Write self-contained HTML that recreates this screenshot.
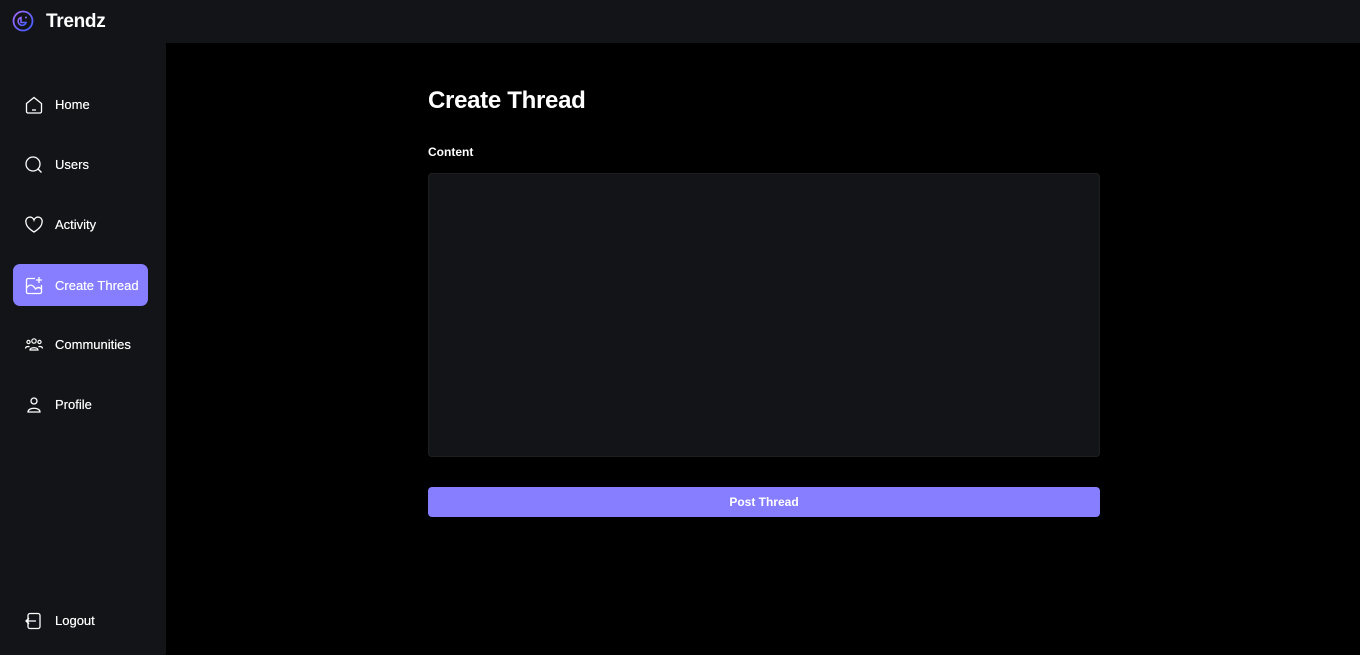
<!DOCTYPE html>
<html><head><style>
*{margin:0;padding:0;box-sizing:border-box}
body{width:1360px;height:655px;background:#000;font-family:"Liberation Sans",sans-serif;color:#fff;position:relative;overflow:hidden}
.top{position:absolute;left:0;top:0;width:1360px;height:43px;background:#121417}
.logo{position:absolute;left:12px;top:10px}
.brand{position:absolute;left:46px;top:11px;font-size:19px;font-weight:bold;letter-spacing:-0.3px}
.side{position:absolute;left:0;top:43px;width:166px;height:612px;background:#121417}
.item{position:absolute;left:13px;width:135px;height:42px;border-radius:7px;font-size:13px;font-weight:normal;text-shadow:0 0 0.4px #fff}
.item svg{position:absolute;left:11px;top:12px}
.item span{position:absolute;left:42px;top:14px}
.act{background:#877eff}
h1{position:absolute;left:428px;top:87px;font-size:24px;font-weight:bold;letter-spacing:-0.3px}
.lbl{position:absolute;left:428px;top:145px;font-size:12px;font-weight:bold}
.ta{position:absolute;left:428px;top:173px;width:672px;height:284px;background:#121417;border:1px solid #1f1f22;border-radius:4px}
.btn{position:absolute;left:428px;top:487px;width:672px;height:30px;background:#877eff;border-radius:4px;font-size:12px;font-weight:bold;text-align:center;line-height:30px}
</style></head><body>
<div class="top">
<svg class="logo" width="22" height="22" viewBox="0 0 22 22"><defs><linearGradient id="g" x1="0" y1="0" x2="1" y2="1"><stop offset="0" stop-color="#a86bff"/><stop offset="1" stop-color="#3b5bff"/></linearGradient></defs><circle cx="11" cy="11" r="9.5" fill="none" stroke="url(#g)" stroke-width="1.8"/><path d="M9 7.5a4 4 0 1 0 5 5h-5z" fill="none" stroke="url(#g)" stroke-width="1.6"/><circle cx="14" cy="7.5" r="1" fill="#8a6bff"/></svg>
<div class="brand">Trendz</div>
</div>
<div class="side">
<div class="item" style="top:40px"><svg width="20" height="20" viewBox="0 0 20 20" fill="none" stroke="#fff" stroke-width="1.3"><path d="M2.5 8.5L10 2.5l7.5 6v8a1.5 1.5 0 0 1-1.5 1.5H4a1.5 1.5 0 0 1-1.5-1.5z"/><path d="M8 15h4"/></svg><span>Home</span></div>
<div class="item" style="top:100px"><svg width="20" height="20" viewBox="0 0 20 20" fill="none" stroke="#fff" stroke-width="1.3"><circle cx="9" cy="9" r="7"/><path d="M14 14l3.5 3.5"/></svg><span>Users</span></div>
<div class="item" style="top:160px"><svg width="20" height="20" viewBox="0 0 20 20" fill="none" stroke="#fff" stroke-width="1.3"><path d="M10 17S2 12.5 2 7.5A4 4 0 0 1 10 5a4 4 0 0 1 8 2.5C18 12.5 10 17 10 17z"/></svg><span>Activity</span></div>
<div class="item act" style="top:221px"><svg width="20" height="20" viewBox="0 0 20 20" fill="none" stroke="#fff" stroke-width="1.3"><path d="M11 2.5H4A1.5 1.5 0 0 0 2.5 4v12A1.5 1.5 0 0 0 4 17.5h12a1.5 1.5 0 0 0 1.5-1.5V9"/><path d="M2.5 12c3-4 6-4 9 1 2-2 4-2 6 0"/><path d="M15 1v6M12 4h6"/></svg><span>Create Thread</span></div>
<div class="item" style="top:280px"><svg width="20" height="20" viewBox="0 0 20 20" fill="none" stroke="#fff" stroke-width="1.2"><circle cx="10" cy="6" r="2.2"/><path d="M6 15c0-3 8-3 8 0z"/><circle cx="4.5" cy="7" r="1.6"/><circle cx="15.5" cy="7" r="1.6"/><path d="M1.5 13.5c0-2 3-2.5 4-1.5M18.5 13.5c0-2-3-2.5-4-1.5"/></svg><span>Communities</span></div>
<div class="item" style="top:340px"><svg width="20" height="20" viewBox="0 0 20 20" fill="none" stroke="#fff" stroke-width="1.3"><circle cx="10" cy="6" r="3"/><path d="M4 17c0-5 12-5 12 0z"/></svg><span>Profile</span></div>
<div class="item" style="top:556px"><svg width="20" height="20" viewBox="0 0 20 20" fill="none" stroke="#fff" stroke-width="1.3"><rect x="4" y="2.5" width="12" height="15" rx="2"/><path d="M12 10H2M5 7l-3 3 3 3"/></svg><span>Logout</span></div>
</div>
<h1>Create Thread</h1>
<div class="lbl">Content</div>
<div class="ta"></div>
<div class="btn">Post Thread</div>
</body></html>
